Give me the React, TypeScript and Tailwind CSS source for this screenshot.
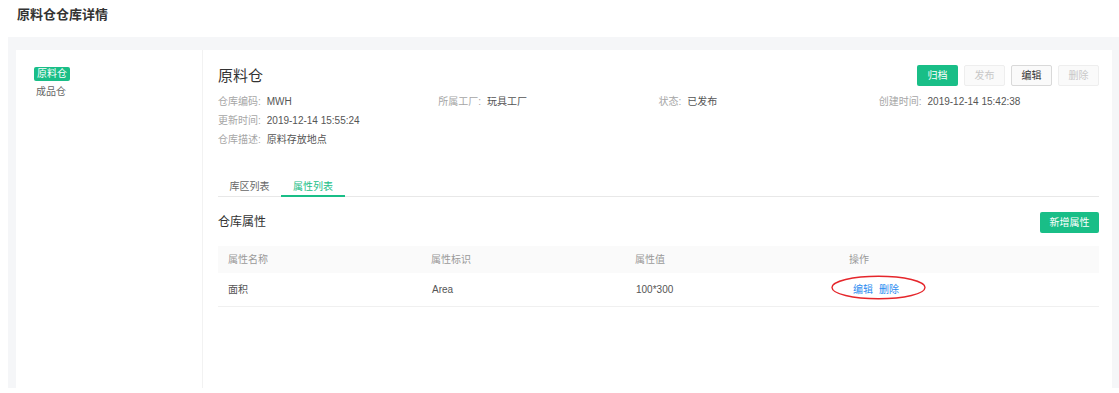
import React from 'react'

const font = { fontFamily: '"Liberation Sans", "Noto Sans CJK SC", sans-serif' }

const infoItems = [
  { label: '仓库编码', value: 'MWH' },
  { label: '所属工厂', value: '玩具工厂' },
  { label: '状态', value: '已发布' },
  { label: '创建时间', value: '2019-12-14 15:42:38' },
]

const InfoItem = ({ label, value }: { label: string; value: string }) => (
  <div className="flex items-center h-[18px] text-[10px]">
    <span className="text-[#a6a6a6]">{label}:</span>
    <span className="ml-[6px] text-[#555]">{value}</span>
  </div>
)

export default function App() {
  return (
    <div className="w-[1119px] h-[393px] bg-white overflow-hidden" style={font}>
      {/* 页面标题 */}
      <div className="h-[37px] pl-[17px] pt-[6px]">
        <h1 className="text-[13px] font-bold text-[#333] leading-[18px]">原料仓仓库详情</h1>
      </div>

      <div className="ml-[8px] pl-[8px] pr-[7px] pt-[13px] h-[351px] bg-[#f5f6f8]">
        <div className="flex h-full bg-white">
          {/* 左侧仓库列表 */}
          <div className="w-[187px] border-r border-[#f2f2f2] pt-[17px] pl-[18px]">
            <div className="flex w-fit items-center h-[14px] px-[3px] rounded-[2px] bg-[#19be87] text-white text-[10px] leading-none">
              原料仓
            </div>
            <div className="mt-[4px] pl-[2px] text-[10px] leading-[14px] text-[#666]">成品仓</div>
          </div>

          {/* 右侧详情 */}
          <div className="flex-1 pl-[15px] pr-[13px] pt-[15px]">
            <div className="flex items-center justify-between h-[21px]">
              <h2 className="text-[15px] text-[#333] leading-none">原料仓</h2>
              <div className="flex gap-[6px]">
                <button className="w-[41px] h-[21px] rounded-[2px] bg-[#19be87] text-white text-[10px]">归档</button>
                <button className="w-[41px] h-[21px] rounded-[2px] border border-[#eee] bg-[#fafafa] text-[#c8c8c8] text-[10px]">发布</button>
                <button className="w-[41px] h-[21px] rounded-[2px] border border-[#d9d9d9] bg-[#fafafa] text-[#333] text-[10px]">编辑</button>
                <button className="w-[41px] h-[21px] rounded-[2px] border border-[#eee] bg-[#fafafa] text-[#c8c8c8] text-[10px]">删除</button>
              </div>
            </div>

            <div className="mt-[6px] grid grid-cols-4">
              {infoItems.map((item) => (
                <InfoItem key={item.label} {...item} />
              ))}
            </div>
            <div className="mt-[1px]">
              <InfoItem label="更新时间" value="2019-12-14 15:55:24" />
            </div>
            <div className="mt-[1px]">
              <InfoItem label="仓库描述" value="原料存放地点" />
            </div>

            {/* 标签页 */}
            <div className="mt-[26px] flex border-b border-[#e8e8e8] h-[23px]">
              <div className="w-[63px] flex justify-center pt-[5px] text-[10px] text-[#666]">库区列表</div>
              <div className="w-[64px] flex justify-center pt-[5px] text-[10px] text-[#19be87] border-b-2 border-[#19be87] -mb-[1px]">
                属性列表
              </div>
            </div>

            <div className="mt-[14px] flex items-center justify-between h-[22px]">
              <span className="text-[12px] text-[#333]">仓库属性</span>
              <button className="w-[59px] h-[21px] rounded-[2px] bg-[#19be87] text-white text-[10px]">新增属性</button>
            </div>

            {/* 属性表格 */}
            <div className="mt-[13px]">
              <div className="flex items-center h-[27px] bg-[#fafafa] text-[10px] text-[#999]">
                <div className="w-[203px] pl-[10px]">属性名称</div>
                <div className="w-[204px] pl-[10px]">属性标识</div>
                <div className="w-[214px] pl-[10px]">属性值</div>
                <div className="flex-1 pl-[10px]">操作</div>
              </div>
              <div className="flex items-center h-[34px] border-b border-[#f0f0f0] text-[10px] text-[#555]">
                <div className="w-[203px] pl-[10px]">面积</div>
                <div className="w-[204px] pl-[11px]">Area</div>
                <div className="w-[214px] pl-[11px]">100*300</div>
                <div className="flex-1 pl-[14px]">
                  <div className="relative inline-flex gap-[6px] text-[#2d8cf0]">
                    <span>编辑</span>
                    <span>删除</span>
                    <svg
                      className="absolute left-[-22px] top-[-7px] pointer-events-none"
                      width="95"
                      height="25"
                      viewBox="0 0 95 25"
                    >
                      <ellipse cx="47.5" cy="12.5" rx="46.5" ry="11.3" fill="none" stroke="#e5262b" strokeWidth="1.4" />
                    </svg>
                  </div>
                </div>
              </div>
            </div>
          </div>
        </div>
      </div>
    </div>
  )
}
